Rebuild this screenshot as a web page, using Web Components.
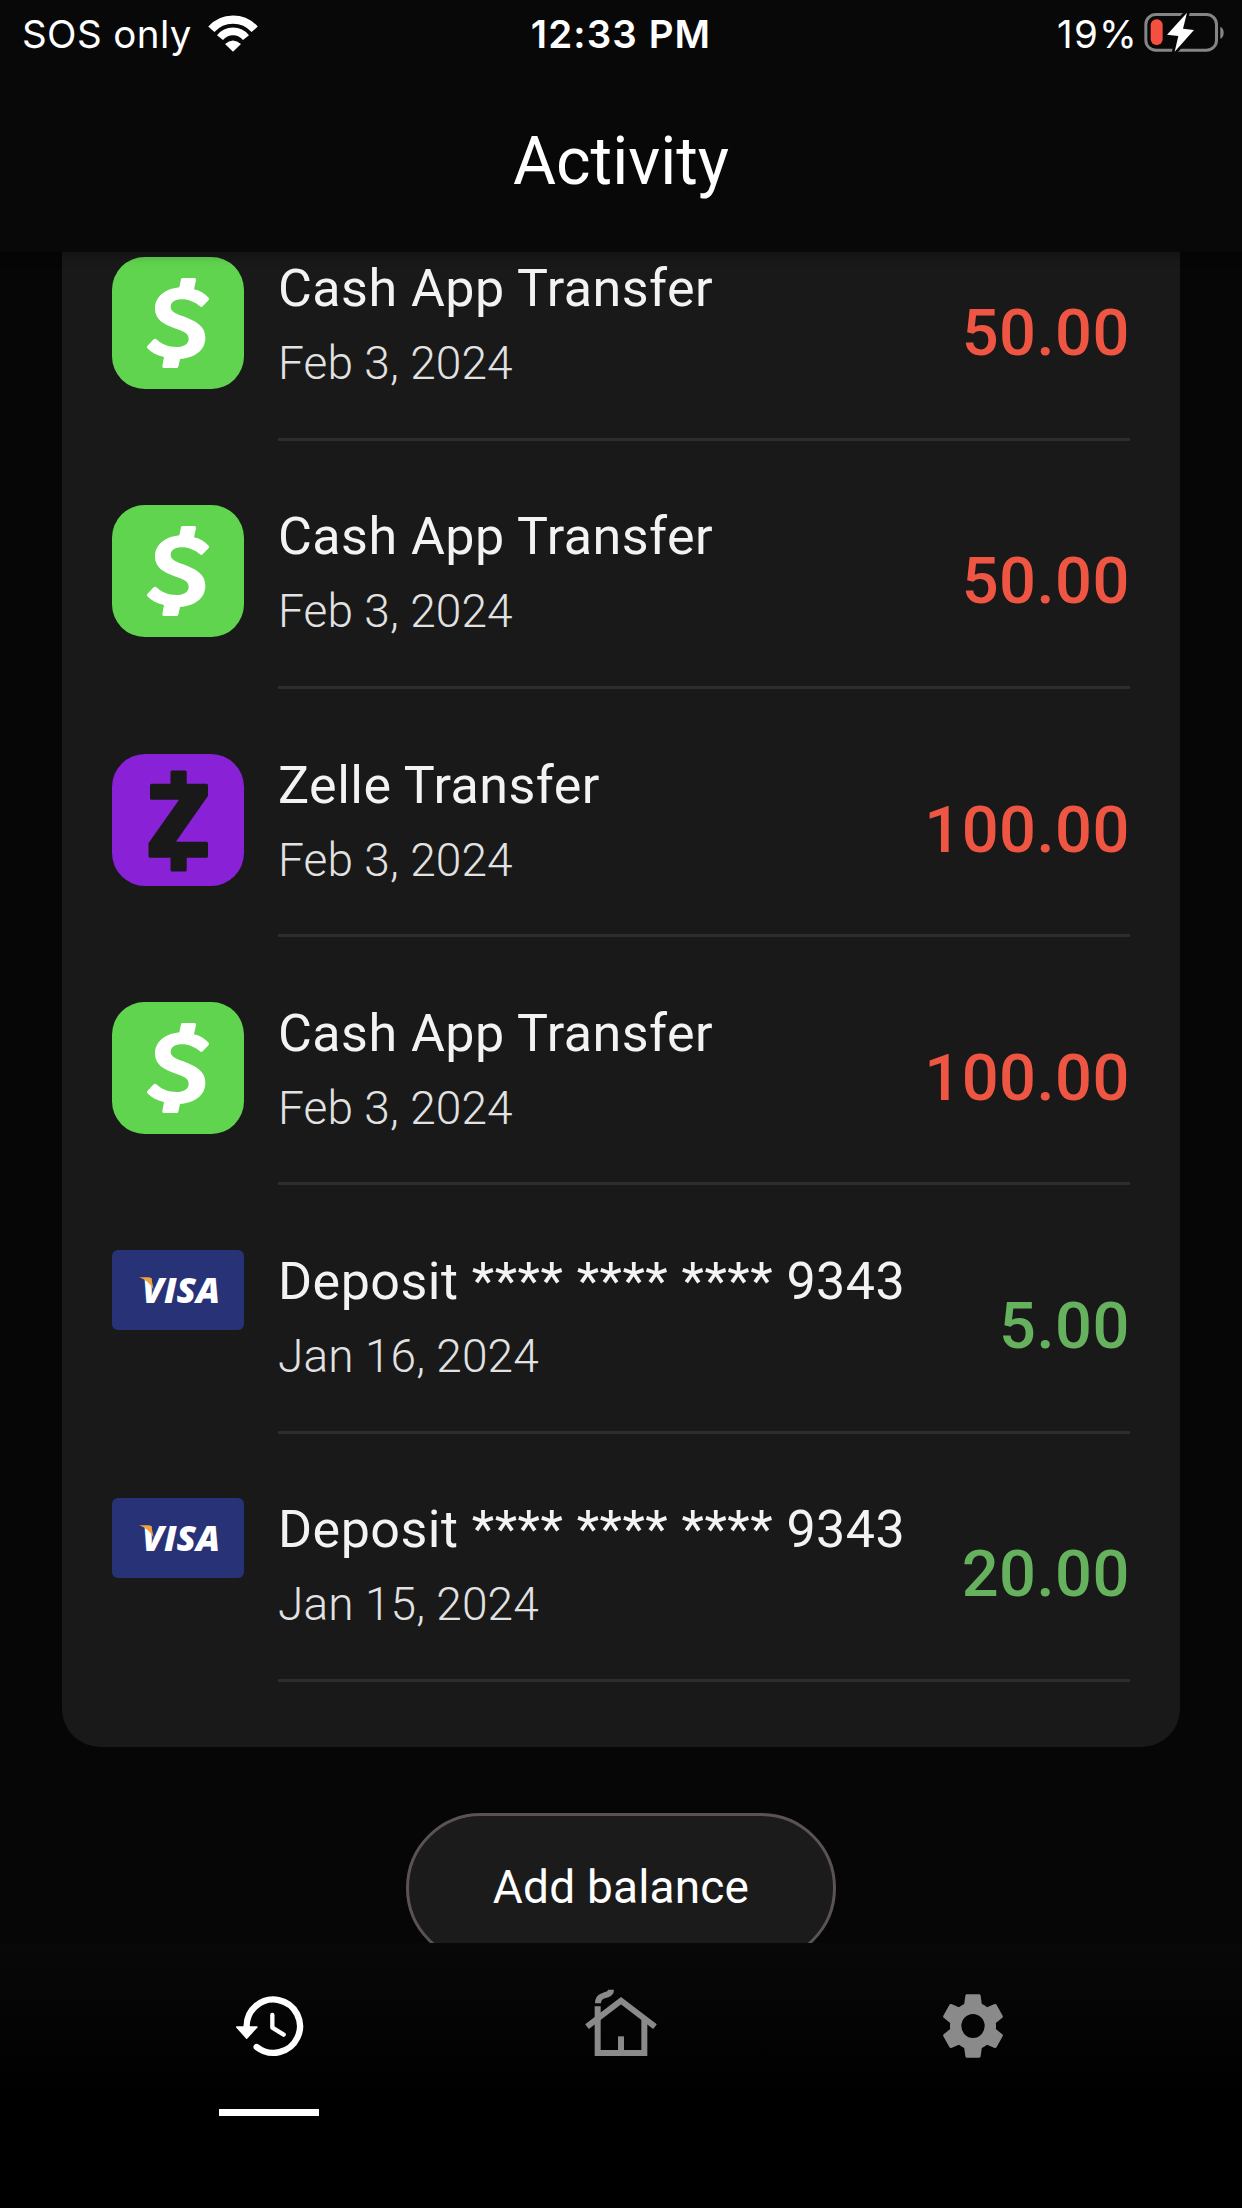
<!DOCTYPE html>
<html lang="en">
<head>
<meta charset="utf-8">
<title>Activity</title>
<style>
    html, body {
        margin: 0;
        padding: 0;
        height: 100%;
        background: #060606;
        overflow: hidden;
    }
</style>
</head>
<body>
<activity-screen></activity-screen>

<script>
const ICONS = {
    cash: `
        <svg viewBox="36 51 396 396" width="132" height="132">
            <rect x="36" y="51" width="396" height="396" rx="98" fill="#61d44f"/>
            <path fill="#fff" d="M243 118q1-4 5-4h35q6 0 5 6l-6 28C301 152 315 162 326 173q3 4 0 7l-18 19q-4 4-8 0C285 186 265 178 246 178C226 178 212 186 212 200C212 215 228 221 250 229C290 244 316 260 316 293C316 332 283 353 240 357l-5 23q-1 4-5 4h-38q-6 0-5-6l5-27C170 347 153 336 142 325q-3-4 0-7l19-20q4-4 8 0C186 314 206 321 229 321C251 321 266 312 266 296C266 280 252 274 228 266C190 253 165 238 165 206C165 170 195 147 238 142z"/>
        </svg>`,
    zelle: `
        <svg viewBox="0 0 132 132" width="132" height="132">
            <rect width="132" height="132" rx="33" fill="#8921d7"/>
            <path fill="#191919" stroke="#191919" stroke-width="3" stroke-linejoin="round" d="M60 18H73.200V31.200H94.500V41.500L63 86.500V89.200H94.500V102.200H73.200V116H60V102.200H38V89.500L69 45.500V44.200H39.500V31.200H60z"/>
        </svg>`,
    history: `
        <svg viewBox="93 83 228 228" width="76" height="76">
            <path fill="none" stroke="currentColor" stroke-width="19" stroke-linecap="round" d="M140 200A80 80 0 1 1 170 260"/>
            <path fill="currentColor" stroke="currentColor" stroke-width="4" stroke-linejoin="round" d="M110 200H171L140 234z"/>
            <path fill="none" stroke="currentColor" stroke-width="13" stroke-linecap="round" stroke-linejoin="round" d="M217 164V202L251 223"/>
        </svg>`,
    home: `
        <svg viewBox="69 83 228 228" width="76" height="76">
            <g fill="none" stroke="currentColor" stroke-width="18">
                <path d="M81 199L183 121L285 199"/>
                <path d="M113 138V278H253V175"/>
                <path d="M183 228V278"/>
                <path d="M114 129C114 112 124 108 136 104C148 101 153 97 153 88"/>
            </g>
        </svg>`,
    settings: `
        <svg viewBox="0 0 24 24" width="76" height="76">
            <path fill="currentColor" transform="translate(.36 0) scale(.97 1)" d="M19.430 12.980c.04-.32.07-.64.07-.98s-.03-.66-.07-.98l2.110-1.650c.19-.15.24-.42.12-.64l-2-3.460c-.12-.22-.39-.3-.61-.22l-2.490 1c-.52-.4-1.080-.73-1.690-.98l-.38-2.650C14.460 2.180 14.250 2 14 2h-4c-.25 0-.46.18-.49.42l-.38 2.650c-.61.25-1.170.59-1.690.98l-2.490-1c-.23-.09-.49 0-.61.22l-2 3.460c-.13.22-.07.49.12.64l2.110 1.650c-.04.32-.07.65-.07.98s.03.66.07.98l-2.110 1.650c-.19.15-.24.42-.12.64l2 3.460c.12.22.39.3.61.22l2.490-1c.52.4 1.080.73 1.690.98l.38 2.650c.03.24.24.42.49.42h4c.25 0 .46-.18.49-.42l.38-2.650c.61-.25 1.170-.59 1.690-.98l2.490 1c.23.09.49 0 .61-.22l2-3.460c.12-.22.07-.49-.12-.64l-2.110-1.650zM12 15.800a3.800 3.800 0 1 1 0-7.600a3.800 3.800 0 0 1 0 7.600z"/>
        </svg>`
};

class StatusBar extends HTMLElement {
    constructor() {
        super();
        this.attachShadow({mode: "open"}).innerHTML = `
        <style>
            :host {
                display: grid;
                grid-template-columns: 1fr auto 1fr;
                height: 68px;
                padding: 0 16px 0 22px;
                font: 400 38.5px/68px Inter, "Liberation Sans", sans-serif;
                color: #fff;
                white-space: nowrap;
            }
            div {
                display: flex;
            }
            svg {
                display: block;
            }
            .network {
                gap: 16px;
                letter-spacing: 0.4px;
            }
            .network svg {
                margin-top: 15px;
            }
            .time {
                font-weight: 600;
                letter-spacing: 1.1px;
                margin-right: 6px;
            }
            .battery {
                justify-content: flex-end;
                gap: 4px;
                letter-spacing: 1.2px;
            }
            .battery svg {
                margin-top: 10px;
            }
        </style>
        <div class="network">
            <span>SOS only</span>
            <svg viewBox="623 45 150 111" width="50" height="37">
                <path fill="none" stroke="#fff" stroke-width="25" d="M633 88A87 87 0 0 1 763 88"/>
                <path fill="none" stroke="#fff" stroke-width="23" d="M659 113A50 50 0 0 1 737 113"/>
                <path fill="#fff" d="M674 132Q698 111 722 132L698 155z"/>
            </svg>
        </div>
        <div class="time">12:33 PM</div>
        <div class="battery">
            <span>19%</span>
            <svg viewBox="36 30 252 135" width="84" height="45">
                <rect x="47.500" y="43.500" width="212" height="107" rx="30" fill="none" stroke="#858585" stroke-width="9"/>
                <path fill="#858585" d="M271 80Q281 84 281 98T271 116z"/>
                <rect x="62" y="58" width="36" height="77" rx="17" fill="#f4503f"/>
                <path fill="#fff" stroke="#080808" stroke-width="16" stroke-linejoin="round" paint-order="stroke" d="M171 38L111 104L145 108L134 155L192 90L159 86z"/>
            </svg>
        </div>`;
    }
}

class AppHeader extends HTMLElement {
    constructor() {
        super();
        this.attachShadow({mode: "open"}).innerHTML = `
        <style>
            :host {
                display: flex;
                flex-direction: column;
                height: 252px;
                background: #080808;
                box-shadow: 0 2px 12px rgba(0, 0, 0, 0.35);
                position: relative;
                z-index: 1;
            }
            h1 {
                margin: 0;
                padding-top: 2px;
                font: 400 66px/184px Roboto, sans-serif;
                height: 182px;
                text-align: center;
                color: #fff;
            }
        </style>
        <status-bar></status-bar>
        <h1><slot></slot></h1>`;
    }
}

class VisaCard extends HTMLElement {
    constructor() {
        super();
        this.attachShadow({mode: "open"}).innerHTML = `
        <style>
            :host {
                display: block;
            }
            svg {
                display: block;
            }
            text {
                font: italic 800 36px "Open Sans", "Noto Sans", sans-serif;
            }
        </style>
        <svg viewBox="0 0 132 80" width="132" height="80">
            <rect width="132" height="80" rx="6" fill="#283277"/>
            <text x="30" y="53" fill="#fff" textLength="78" lengthAdjust="spacingAndGlyphs">VISA</text>
            <path fill="#f0a03c" d="M27.300 27.300H37Q39 27.300 39.700 30L41.700 40Q37.500 31 27.300 27.300z"/>
        </svg>`;
    }
}

class TransactionItem extends HTMLElement {
    constructor() {
        super();
        this.shadowDOM = this.attachShadow({mode: "open"});
    }

    set transaction(transaction) {
        this._transaction = transaction;
        this.render();
    }

    render() {
        const {icon, title, date, amount, credit} = this._transaction;
        this.shadowDOM.innerHTML = `
        <style>
            :host {
                display: grid;
                grid-template-columns: 132px 1fr;
                column-gap: 34px;
                height: 183.5px;
                margin-bottom: 64.78px;
                font-family: Roboto, sans-serif;
            }
            svg {
                display: block;
            }
            .body {
                display: flex;
                justify-content: space-between;
                padding-top: 2px;
                border-bottom: 3px solid #2d2d2d;
                white-space: nowrap;
            }
            .title {
                font-size: 52px;
                line-height: 60px;
                letter-spacing: 0.48px;
                color: #f3f3f3;
            }
            .date {
                margin-top: 17px;
                font-size: 46px;
                font-weight: 300;
                line-height: 54px;
                letter-spacing: 0.1px;
                color: #e2e2e2;
            }
            .amount {
                margin-top: 36px;
                font-size: 65px;
                font-weight: 500;
                line-height: 76px;
                letter-spacing: 0.5px;
                color: #ef5543;
            }
            .amount.credit {
                color: #66b15e;
            }
        </style>
        <div class="icon">${icon === "visa" ? "<visa-card></visa-card>" : ICONS[icon]}</div>
        <div class="body">
            <div>
                <div class="title">${title}</div>
                <div class="date">${date}</div>
            </div>
            <div class="amount ${credit ? "credit" : ""}">${amount}</div>
        </div>`;
    }
}

class TransactionList extends HTMLElement {
    constructor() {
        super();
        this.shadowDOM = this.attachShadow({mode: "open"});
        this.shadowDOM.innerHTML = `
        <style>
            :host {
                display: flow-root;
                width: 1018px;
                padding: 5px 50px 0;
                background: #191919;
                border-radius: 0 0 38px 38px;
            }
        </style>`;
    }

    set transactions(transactions) {
        transactions.forEach(transaction => {
            const item = document.createElement("transaction-item");
            item.transaction = transaction;
            this.shadowDOM.appendChild(item);
        });
    }
}

class PillButton extends HTMLElement {
    constructor() {
        super();
        this.attachShadow({mode: "open"}).innerHTML = `
        <style>
            :host {
                display: block;
            }
            button {
                display: block;
                box-sizing: border-box;
                width: 430px;
                height: 150px;
                padding: 0;
                border: 3px solid #5a5352;
                border-radius: 75px;
                background: #1b1b1b;
                color: #fff;
                font: 400 46px/143px Roboto, sans-serif;
                letter-spacing: 0.2px;
            }
        </style>
        <button type="button"><slot></slot></button>`;
    }
}

class NavTab extends HTMLElement {
    constructor() {
        super();
        this.attachShadow({mode: "open"}).innerHTML = `
        <style>
            :host {
                display: flex;
                flex-direction: column;
                align-items: center;
                width: 352px;
                padding-top: 44.5px;
                color: #8a8a8a;
            }
            :host([active]) {
                color: #fff;
            }
            svg {
                display: block;
            }
            :host([active])::after {
                content: "";
                width: 100px;
                height: 7px;
                margin-top: 45px;
                background: #fff;
            }
        </style>
        ${ICONS[this.getAttribute("icon")]}`;
    }
}

class BottomNav extends HTMLElement {
    constructor() {
        super();
        this.attachShadow({mode: "open"}).innerHTML = `
        <style>
            :host {
                display: flex;
                justify-content: center;
                height: 265px;
                background: linear-gradient(to bottom, #080808, #000 60%);
            }
        </style>
        <nav-tab icon="history" active></nav-tab>
        <nav-tab icon="home"></nav-tab>
        <nav-tab icon="settings"></nav-tab>`;
    }
}

class ActivityScreen extends HTMLElement {
    constructor() {
        super();
        this.shadowDOM = this.attachShadow({mode: "open"});
        this.shadowDOM.innerHTML = `
        <style>
            :host {
                display: flex;
                flex-direction: column;
                width: 1242px;
                height: 2208px;
                overflow: hidden;
                background: #060606;
            }
            main {
                display: flex;
                flex-direction: column;
                align-items: center;
                gap: 66px;
                flex: 1;
                min-height: 0;
                overflow: hidden;
            }
            transaction-list, pill-button {
                flex: none;
            }
        </style>
        <app-header>Activity</app-header>
        <main>
            <transaction-list></transaction-list>
            <pill-button>Add balance</pill-button>
        </main>
        <bottom-nav></bottom-nav>`;
    }

    connectedCallback() {
        this.shadowDOM.querySelector("transaction-list").transactions = [
            {icon: "cash", title: "Cash App Transfer", date: "Feb 3, 2024", amount: "50.00"},
            {icon: "cash", title: "Cash App Transfer", date: "Feb 3, 2024", amount: "50.00"},
            {icon: "zelle", title: "Zelle Transfer", date: "Feb 3, 2024", amount: "100.00"},
            {icon: "cash", title: "Cash App Transfer", date: "Feb 3, 2024", amount: "100.00"},
            {icon: "visa", title: "Deposit **** **** **** 9343", date: "Jan 16, 2024", amount: "5.00", credit: true},
            {icon: "visa", title: "Deposit **** **** **** 9343", date: "Jan 15, 2024", amount: "20.00", credit: true}
        ];
    }
}

customElements.define("status-bar", StatusBar);
customElements.define("app-header", AppHeader);
customElements.define("visa-card", VisaCard);
customElements.define("transaction-item", TransactionItem);
customElements.define("transaction-list", TransactionList);
customElements.define("pill-button", PillButton);
customElements.define("nav-tab", NavTab);
customElements.define("bottom-nav", BottomNav);
customElements.define("activity-screen", ActivityScreen);
</script>
</body>
</html>
